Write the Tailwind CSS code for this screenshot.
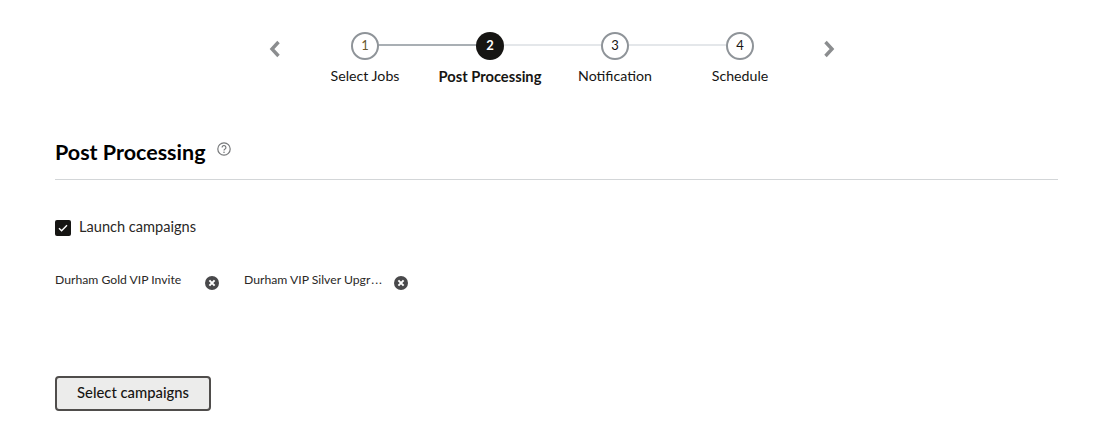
<!DOCTYPE html>
<html><head><meta charset="utf-8"><script src="https://cdn.jsdelivr.net/npm/@tailwindcss/browser@4"></script></head>
<body class="bg-white">
<div class="w-[1103px] h-[426px] overflow-hidden font-['Lato','Noto_Sans',sans-serif] text-[#161513]">
  <div class="flex justify-center items-start pt-[32px] h-[102px] pl-[2px]">
    <div class="w-[34px] h-[28px] mt-[3px] flex items-center justify-center">
      <svg width="14" height="18" viewBox="0 0 14 18"><path d="M9.500 2 3 9l6.500 7" fill="none" stroke="#8b8d8f" stroke-width="3.400"/></svg>
    </div>
    <div class="flex ml-[10px]">
      <div class="w-[125px] flex flex-col items-center relative">
        <div class="absolute left-1/2 top-[12px] w-full h-[2px] bg-[#a9afb4]"></div>
        <div class="relative w-[28px] h-[28px] rounded-full bg-white border-2 border-[#8f9499] flex items-center justify-center text-[13px] text-[#6b5a2e]">1</div>
        <div class="mt-[6px] text-[14.200px] leading-[20px] whitespace-nowrap">Select Jobs</div>
      </div>
      <div class="w-[125px] flex flex-col items-center relative">
        <div class="absolute left-1/2 top-[12px] w-full h-[2px] bg-[#e4e7ea]"></div>
        <div class="relative w-[28px] h-[28px] rounded-full bg-[#161513] flex items-center justify-center text-[13px] font-bold text-white">2</div>
        <div class="mt-[6px] text-[14.700px] leading-[20px] font-bold whitespace-nowrap">Post Processing</div>
      </div>
      <div class="w-[125px] flex flex-col items-center relative">
        <div class="absolute left-1/2 top-[12px] w-full h-[2px] bg-[#e4e7ea]"></div>
        <div class="relative w-[28px] h-[28px] rounded-full bg-white border-2 border-[#8f9499] flex items-center justify-center text-[13px]">3</div>
        <div class="mt-[6px] text-[14.200px] leading-[20px] whitespace-nowrap">Notification</div>
      </div>
      <div class="w-[125px] flex flex-col items-center relative">
        <div class="relative w-[28px] h-[28px] rounded-full bg-white border-2 border-[#8f9499] flex items-center justify-center text-[13px]">4</div>
        <div class="mt-[6px] text-[14.200px] leading-[20px] whitespace-nowrap">Schedule</div>
      </div>
    </div>
    <div class="w-[34px] h-[28px] mt-[3px] ml-[10px] flex items-center justify-center">
      <svg width="14" height="18" viewBox="0 0 14 18"><path d="M2.500 2 9 9l-6.500 7" fill="none" stroke="#8b8d8f" stroke-width="3.400"/></svg>
    </div>
  </div>
  <div class="pl-[55px] w-[1058px]">
    <div class="flex items-start h-[78px] pt-[36px] border-b border-[#d3d6d8]">
      <h1 class="text-[21.500px] leading-[28px] font-bold text-black">Post Processing</h1>
      <svg class="ml-[11px] mt-[4px]" width="14" height="14" viewBox="0 0 14 14" fill="none"><circle cx="7" cy="7" r="6.200" stroke="#77797b" stroke-width="1.200"/><path d="M5.100 5.500a1.900 1.900 0 1 1 2.900 1.600c-.7.4-1 .8-1 1.500" stroke="#77797b" stroke-width="1.200"/><circle cx="7" cy="10.300" r=".8" fill="#77797b"/></svg>
    </div>
    <div class="flex items-center mt-[37px] h-[22px]">
      <div class="w-[16px] h-[16px] rounded-[2px] bg-[#161513] flex items-center justify-center">
        <svg width="10" height="8" viewBox="0 0 10 8"><path d="M1 4.200 3.600 6.800 9 1.200" fill="none" stroke="white" stroke-width="1.400"/></svg>
      </div>
      <span class="ml-[8px] mb-[2px] text-[14.600px] leading-[20px] font-normal text-[#2a2826]">Launch campaigns</span>
    </div>
    <div class="flex mt-[32px] h-[28px]">
      <div class="flex items-start w-[189px]">
        <span class="text-[12.200px] leading-[18px] w-[127px] whitespace-nowrap text-[#2a2826]">Durham Gold VIP Invite</span>
        <svg class="ml-[23px] mt-[5px]" width="14" height="14" viewBox="0 0 14 14"><circle cx="7" cy="7" r="7" fill="#49494b"/><path d="M4.400 4.400 9.600 9.600M9.600 4.400 4.400 9.600" stroke="white" stroke-width="2"/></svg>
      </div>
      <div class="flex items-start">
        <span class="text-[12.200px] leading-[18px] w-[140px] whitespace-nowrap text-[#2a2826]">Durham VIP Silver Upgr<span class="ml-[1px] tracking-[1px]">...</span></span>
        <svg class="ml-[10px] mt-[5px]" width="14" height="14" viewBox="0 0 14 14"><circle cx="7" cy="7" r="7" fill="#49494b"/><path d="M4.400 4.400 9.600 9.600M9.600 4.400 4.400 9.600" stroke="white" stroke-width="2"/></svg>
      </div>
    </div>
    <button class="block mt-[77px] w-[156px] h-[35px] rounded-[4px] border-2 border-[#4f4d4b] bg-[#ececeb] text-[14.800px] leading-[28px] pb-[4px] font-medium text-[#161513]">Select campaigns</button>
  </div>
</div>
</body></html>
